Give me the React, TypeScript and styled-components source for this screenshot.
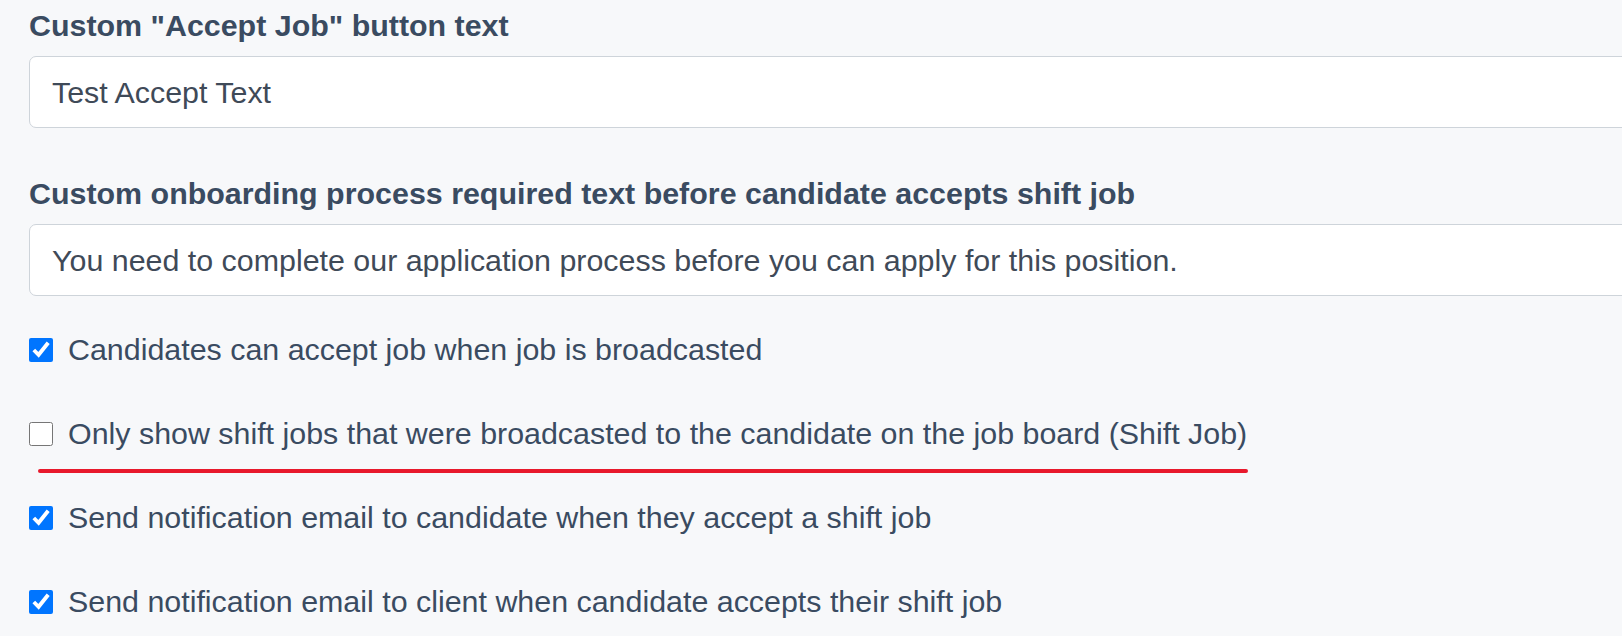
import React from 'react'
import styled, { createGlobalStyle } from 'styled-components'

const Global = createGlobalStyle`
  html, body {
    margin: 0;
    padding: 0;
    background: #f7f8fa;
    overflow: hidden;
  }
  body {
    font-family: "Liberation Sans", Arial, sans-serif;
    color: #3a4b61;
  }
`

const options = [
  { text: 'Candidates can accept job when job is broadcasted', checked: true },
  { text: 'Only show shift jobs that were broadcasted to the candidate on the job board (Shift Job)', checked: false, marked: true },
  { text: 'Send notification email to candidate when they accept a shift job', checked: true },
  { text: 'Send notification email to client when candidate accepts their shift job', checked: true },
]

const App = () => {
  return (
    <Page>
      <Global />
      <Group>
        <Label>Custom "Accept Job" button text</Label>
        <Input defaultValue="Test Accept Text" />
      </Group>
      <Group>
        <Label>Custom onboarding process required text before candidate accepts shift job</Label>
        <Input defaultValue="You need to complete our application process before you can apply for this position." />
      </Group>
      <Checks>
        {options.map((o) => (
          <CheckRow key={o.text}>
            <Box type="checkbox" defaultChecked={o.checked} />
            <span>{o.text}</span>
            {o.marked && <Underline />}
          </CheckRow>
        ))}
      </Checks>
    </Page>
  )
}

export default App

const Page = styled.div`
  width: 1720px;
  padding: 3px 0 0 29px;
  box-sizing: border-box;
  display: flex;
  flex-direction: column;
  gap: 43px;
`

const Group = styled.div``

const Label = styled.label`
  display: block;
  font-size: 30.4px;
  line-height: 45px;
  font-weight: 700;
  margin-bottom: 8px;
  color: #3a4b61;
`

const Input = styled.input`
  display: block;
  box-sizing: border-box;
  width: 100%;
  height: 72px;
  padding: 0 22px;
  font-family: "Liberation Sans", Arial, sans-serif;
  font-size: 30.4px;
  color: #3f4a58;
  background: #fff;
  border: 1.5px solid #ced4da;
  border-radius: 7px;
  outline: none;
`

const Checks = styled.div`
  display: flex;
  flex-direction: column;
  gap: 39px;
  margin-top: -12px;
`

const CheckRow = styled.label`
  position: relative;
  display: flex;
  align-items: center;
  gap: 15px;
  height: 45px;
  font-size: 30.4px;
  line-height: 45px;
  color: #3a4b61;
`

const Box = styled.input`
  width: 24px;
  height: 24px;
  margin: 0;
  flex: none;
`

const Underline = styled.div`
  position: absolute;
  left: 9px;
  top: 58px;
  width: 1210px;
  height: 4px;
  border-radius: 2px;
  background: #e8192c;
`
